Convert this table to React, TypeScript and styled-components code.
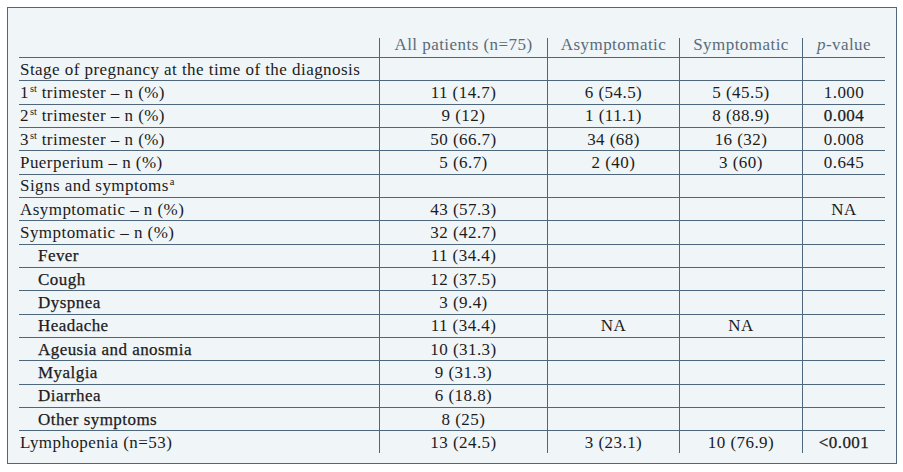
import React from "react";
import styled, { createGlobalStyle } from "styled-components";

const GlobalStyle = createGlobalStyle`
  html, body { margin: 0; padding: 0; background: #ffffff; }
  body { font-family: "Liberation Serif", "Times New Roman", serif; }
`;

const COLS = "360px 168px 132px 123px 83px";
const LINE = "#4e677c";

const Frame = styled.div`
  margin: 7px 0 0 7px;
  width: 890px;
  height: 457px;
  box-sizing: border-box;
  border: 1px solid ${LINE};
  background: #f0f5f8;
  padding: 30px 10px 0 11px;
`;

const Table = styled.div`
  display: flex;
  flex-direction: column;
  width: 866px;
  font-size: 17px;
  letter-spacing: 0.45px;
  color: #1c1c1c;
`;

const Row = styled.div<{ $head?: boolean; $last?: boolean }>`
  display: grid;
  grid-template-columns: ${COLS};
  box-sizing: border-box;
  height: ${(p) => (p.$head ? "20px" : p.$last ? "22px" : "23.333px")};
  border-bottom: ${(p) => (p.$last ? "none" : `1px solid ${LINE}`)};
`;

const Cell = styled.div<{ $first?: boolean; $head?: boolean; $indent?: boolean; $strong?: boolean }>`
  display: flex;
  align-items: ${(p) => (p.$head ? "flex-start" : "center")};
  justify-content: ${(p) => (p.$first ? "flex-start" : "center")};
  box-sizing: border-box;
  border-left: ${(p) => (p.$first ? "none" : `1px solid ${LINE}`)};
  padding: ${(p) => (p.$head ? "0" : "1px 0 0 0")};
  padding-left: ${(p) => (p.$first ? (p.$indent ? "19px" : "1px") : "0")};
  line-height: ${(p) => (p.$head ? "13px" : "20px")};
  color: ${(p) => (p.$head ? "#5a6c7a" : "#1c1c1c")};
  white-space: pre;
  -webkit-text-stroke: ${(p) => (p.$strong ? "0.25px currentColor" : "0")};
`;

const Text = styled.span`
  display: block;
`;

const Sup = styled.span`
  font-size: 10.5px;
  line-height: 0;
  vertical-align: 6px;
  letter-spacing: 0;
  margin-left: 1px;
`;

const Ital = styled.i`
  font-style: italic;
`;

type R = {
  label: React.ReactNode;
  vals: string[];
  indent?: boolean;
  strongLabel?: boolean;
  strongP?: boolean;
};

const rows: R[] = [
  { label: "Stage of pregnancy at the time of the diagnosis", vals: ["", "", "", ""] },
  { label: <>1<Sup>st</Sup>{" trimester – n (%)"}</>, vals: ["11 (14.7)", "6 (54.5)", "5 (45.5)", "1.000"] },
  { label: <>2<Sup>st</Sup>{" trimester – n (%)"}</>, vals: ["9 (12)", "1 (11.1)", "8 (88.9)", "0.004"], strongP: true },
  { label: <>3<Sup>st</Sup>{" trimester – n (%)"}</>, vals: ["50 (66.7)", "34 (68)", "16 (32)", "0.008"] },
  { label: "Puerperium – n (%)", vals: ["5 (6.7)", "2 (40)", "3 (60)", "0.645"] },
  { label: <>Signs and symptoms<Sup>a</Sup></>, vals: ["", "", "", ""] },
  { label: "Asymptomatic – n (%)", vals: ["43 (57.3)", "", "", "NA"] },
  { label: "Symptomatic – n (%)", vals: ["32 (42.7)", "", "", ""] },
  { label: "Fever", vals: ["11 (34.4)", "", "", ""], indent: true, strongLabel: true },
  { label: "Cough", vals: ["12 (37.5)", "", "", ""], indent: true, strongLabel: true },
  { label: "Dyspnea", vals: ["3 (9.4)", "", "", ""], indent: true, strongLabel: true },
  { label: "Headache", vals: ["11 (34.4)", "NA", "NA", ""], indent: true, strongLabel: true },
  { label: "Ageusia and anosmia", vals: ["10 (31.3)", "", "", ""], indent: true, strongLabel: true },
  { label: "Myalgia", vals: ["9 (31.3)", "", "", ""], indent: true, strongLabel: true },
  { label: "Diarrhea", vals: ["6 (18.8)", "", "", ""], indent: true, strongLabel: true },
  { label: "Other symptoms", vals: ["8 (25)", "", "", ""], indent: true, strongLabel: true },
  { label: "Lymphopenia (n=53)", vals: ["13 (24.5)", "3 (23.1)", "10 (76.9)", "<0.001"], strongP: true },
];

export default function App() {
  return (
    <>
      <GlobalStyle />
      <Frame>
        <Table>
          <Row $head>
            <Cell $first $head />
            <Cell $head>All patients (n=75)</Cell>
            <Cell $head>Asymptomatic</Cell>
            <Cell $head>Symptomatic</Cell>
            <Cell $head>
              <Text>
                <Ital>p</Ital>-value
              </Text>
            </Cell>
          </Row>
          {rows.map((r, i) => (
            <Row key={i} $last={i === rows.length - 1}>
              <Cell $first $indent={r.indent} $strong={r.strongLabel}>
                <Text>{r.label}</Text>
              </Cell>
              {r.vals.map((v, j) => (
                <Cell key={j} $strong={j === 3 && r.strongP}>
                  {v}
                </Cell>
              ))}
            </Row>
          ))}
        </Table>
      </Frame>
    </>
  );
}
